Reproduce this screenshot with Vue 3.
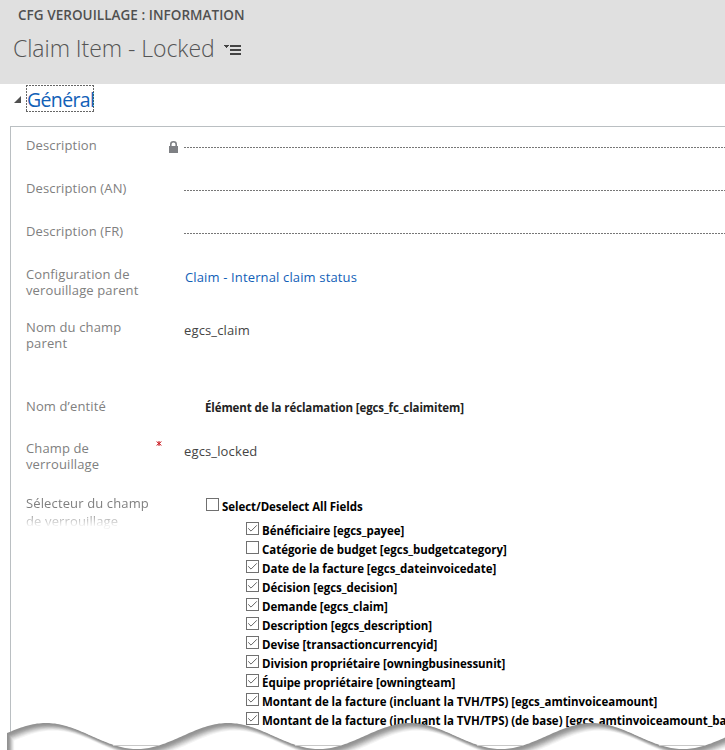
<script setup>
const topRows = [
  { label: 'Description', locked: true },
  { label: 'Description (AN)' },
  { label: 'Description (FR)' }
]

const fields = [
  { text: 'Bénéficiaire [egcs_payee]', on: true },
  { text: 'Catégorie de budget [egcs_budgetcategory]', on: false },
  { text: 'Date de la facture [egcs_dateinvoicedate]', on: true },
  { text: 'Décision [egcs_decision]', on: true },
  { text: 'Demande [egcs_claim]', on: true },
  { text: 'Description [egcs_description]', on: true },
  { text: 'Devise [transactioncurrencyid]', on: true },
  { text: 'Division propriétaire [owningbusinessunit]', on: true },
  { text: 'Équipe propriétaire [owningteam]', on: true },
  { text: 'Montant de la facture (incluant la TVH/TPS) [egcs_amtinvoiceamount]', on: true },
  { text: 'Montant de la facture (incluant la TVH/TPS) (de base) [egcs_amtinvoiceamount_base]', on: true }
]

// Torn lower edge: one crest every 182px, shaded below by stepped copies of the curve.
let wave = 'M7 60'
for (let x = 7; x <= 740; x += 2) {
  const y = 22 - 13 * Math.cos(((x - 46) / 182) * 2 * Math.PI)
  wave += ` L${x} ${y.toFixed(1)}`
}
wave += ' L740 60 Z'
const shades = ['#929292', '#959595', '#9c9c9c', '#a8a8a8', '#b8b8b8', '#c9c9c9', '#d9d9d9', '#e8e8e8', '#f5f5f5', '#ffffff']
</script>

<template>
  <div class="page">
    <header class="head">
      <div class="crumb"><span>CFG VEROUILLAGE : INFORMATION</span></div>
      <div class="title">
        <h1>Claim Item - Locked</h1>
        <svg width="18" height="12" viewBox="0 0 18 12" shape-rendering="crispEdges">
          <path d="M0 1h5v1h-1v1h-1v1h-1v-1h-1v-1h-1z" fill="#444" />
          <path d="M6 1h11v2h-11zM6 5h11v2h-11zM6 9h11v2h-11z" fill="#444" />
        </svg>
      </div>
    </header>

    <div class="section">
      <svg width="7" height="7" viewBox="0 0 7 7"><path d="M7 0V7H0Z" fill="#505050" /></svg>
      <a class="section-name"><span>Général</span></a>
    </div>

    <main class="panel">
      <div v-for="r in topRows" :key="r.label" class="row plain">
        <div class="label">{{ r.label }}</div>
        <div class="mark">
          <svg v-if="r.locked" width="9" height="12" viewBox="0 0 9 12">
            <path d="M1.8 6V3.2a2.7 2.4 0 0 1 5.4 0V6" fill="none" stroke="#7e8084" stroke-width="1.6" />
            <path d="M0 5h9v7H0z" fill="#7e8084" />
          </svg>
        </div>
        <div class="dots"></div>
      </div>
      <div class="row config">
        <div class="label">Configuration de<br>verouillage parent</div>
        <div class="mark"></div>
        <a class="value link">Claim - Internal claim status</a>
      </div>
      <div class="row parent">
        <div class="label">Nom du champ<br>parent</div>
        <div class="mark"></div>
        <div class="value">egcs_claim</div>
      </div>
      <div class="row entity">
        <div class="label">Nom d’entité</div>
        <div class="mark"></div>
        <div class="value strong">Élément de la réclamation [egcs_fc_claimitem]</div>
      </div>
      <div class="row champ">
        <div class="label">Champ de<br>verrouillage</div>
        <div class="mark">
          <svg class="star" width="6" height="5" viewBox="0 0 6 5">
            <path d="M3 0v5M.6 .6l4.8 3.8M5.4 .6L.6 4.4" fill="none" stroke="#c8141b" stroke-width="1" />
          </svg>
        </div>
        <div class="value">egcs_locked</div>
      </div>
      <div class="row selector">
        <div class="label fade">Sélecteur du champ<br>de verrouillage</div>
        <div class="mark"></div>
        <div class="tree">
          <div class="opt all"><i class="box"></i><span>Select/Deselect All Fields</span></div>
          <div v-for="f in fields" :key="f.text" class="opt">
            <i class="box">
              <svg v-if="f.on" width="11" height="11" viewBox="0 0 11 11">
                <path d="M1.2 5.3L4 8.1L9.8 2.3" fill="none" stroke="#666" stroke-width="1" />
              </svg>
            </i>
            <span>{{ f.text }}</span>
          </div>
        </div>
      </div>
    </main>

    <svg class="torn" width="725" height="36" viewBox="0 0 725 36">
      <path v-for="(c, i) in shades" :key="c" :d="wave" :fill="c" :transform="`translate(${i * 0.8} ${i * 0.85})`" />
      <path d="M113 31.5h46M295 31.5h46M477 31.5h46M659 31.5h46" stroke="#c8c8c8" stroke-width="1" />
    </svg>
  </div>
</template>

<style>
body { background: #fff; overflow: hidden; }
</style>

<style scoped>
.page { position: relative; width: 725px; height: 750px; overflow: hidden; background: #fff; font-family: "Open Sans", "Noto Sans", sans-serif; font-size: 13px; color: #444; white-space: nowrap; }
.head { height: 84px; background: #e0e0e0; box-sizing: border-box; padding: 6px 0 0 18px; }
.crumb { height: 18px; line-height: 18px; font-size: 13.5px; font-weight: 600; color: #505050; letter-spacing: 0.04px; }
.title { display: flex; align-items: center; height: 48px; margin-left: -5px; color: #555; }
.title svg { margin-top: 3px; }
h1 { margin: 0 0 1px; width: 211px; font-size: 23px; line-height: 32px; font-weight: 300; letter-spacing: -0.05px; }
.section { display: flex; align-items: center; height: 42px; padding-left: 14px; box-sizing: border-box; padding-bottom: 13px; }
.section > svg { margin-right: 5px; margin-top: 1px; }
.section-name {
  box-sizing: border-box; width: 68px; height: 27px; color: #1160b7; font-size: 19.5px; line-height: 29px; letter-spacing: -0.65px; padding-left: 1px;
  background:
    repeating-linear-gradient(90deg, #666 0 2px, transparent 2px 3px) top / 100% 1px no-repeat,
    repeating-linear-gradient(90deg, #666 0 2px, transparent 2px 3px) bottom / 100% 1px no-repeat,
    repeating-linear-gradient(#666 0 2px, transparent 2px 3px) left / 1px 100% no-repeat,
    repeating-linear-gradient(#666 0 2px, transparent 2px 3px) right / 1px 100% no-repeat;
}
.panel { box-sizing: border-box; margin-left: 10px; height: 624px; border: solid #babfc2; border-width: 1px 0 0 1px; overflow: hidden; }
.row { display: grid; grid-template-columns: 130px 28px 1fr; padding-left: 15px; }
.label { font-size: 13px; line-height: 16px; color: #808080; letter-spacing: 0.13px; }
.plain { height: 43px; }
.plain .label { padding-top: 10px; }
.plain .mark { padding: 14px 0 0 13px; }
.mark svg { display: block; }
.dots { height: 21px; box-sizing: border-box; background: repeating-linear-gradient(90deg, #777 0 2px, transparent 2px 3px) bottom / 100% 1px no-repeat; }
.value { font-size: 13px; line-height: 18px; color: #444; letter-spacing: 0.14px; }
.link { color: #1160b7; padding-left: 1px; }
.config { height: 53px; padding-top: 10px; box-sizing: border-box; }
.config .value { padding-top: 2px; }
.parent { height: 79px; padding-top: 10px; box-sizing: border-box; }
.parent .value { padding-top: 2px; }
.entity { height: 42px; padding-top: 10px; box-sizing: border-box; }
.value.strong { font-size: 11.5px; font-weight: 700; color: #222; padding: 1px 0 0 21px; letter-spacing: -0.11px; }
.champ { height: 55px; padding-top: 10px; box-sizing: border-box; }
.champ .value { padding-top: 2px; }
.champ .star { margin: 1px 0 0 0; }
.selector { padding-top: 10px; }
.selector .label { line-height: 18px; height: 36px; margin-top: -1px; }
.fade { mask-image: linear-gradient(#000 50%, rgba(0, 0, 0, .1) 88%); }
.tree { padding-left: 62px; }
.opt { display: flex; align-items: center; height: 19px; font-size: 11.5px; font-weight: 700; color: #000; letter-spacing: -0.04px; }
.opt span { position: relative; top: 2px; }
.opt.all { margin: 0 0 5px -40px; letter-spacing: -0.06px; }
.box { flex: none; width: 13px; height: 13px; box-sizing: border-box; border: 1px solid #707070; margin-right: 3px; }
.box svg { display: block; }
.torn { position: absolute; left: 0; top: 714px; }
</style>
